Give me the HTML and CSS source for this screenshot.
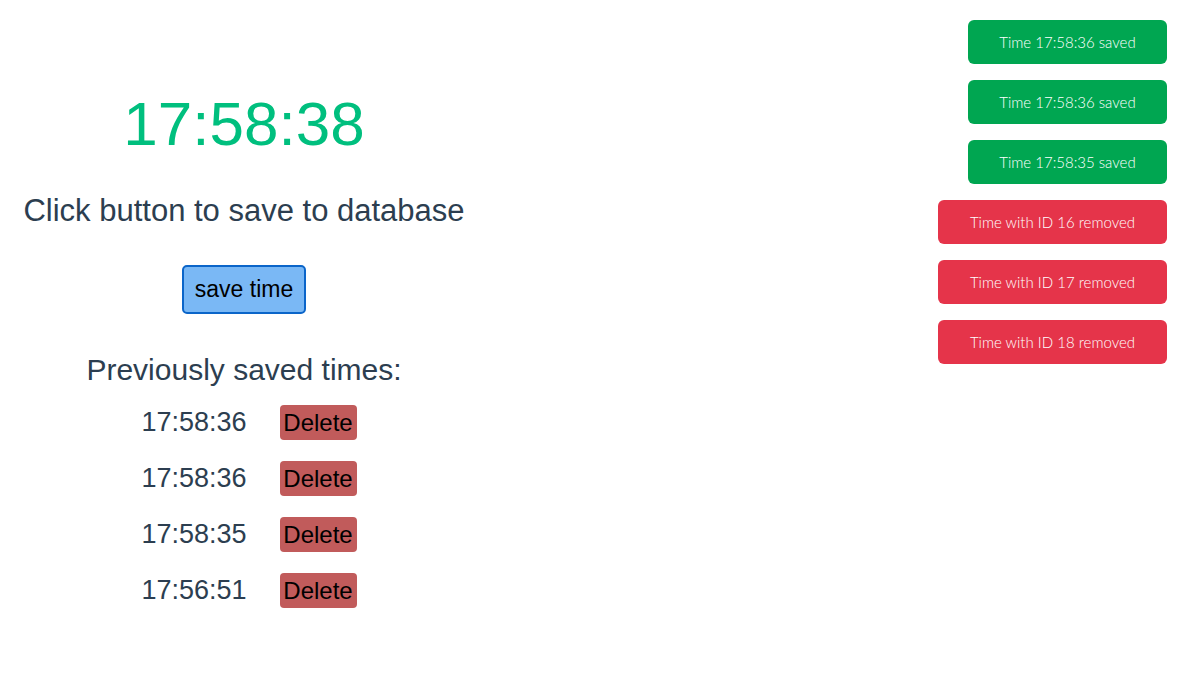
FILE: index.html
```html
<!DOCTYPE html>
<html>
<head>
<meta charset="utf-8">
<link rel="stylesheet" href="styles.css">
</head>
<body>
<div class="app">
  <div class="clock">17:58:38</div>
  <div class="hint">Click button to save to database</div>
  <button class="save">save time</button>
  <div class="subtitle">Previously saved times:</div>
  <ul class="list">
    <li class="row"><span class="time">17:58:36</span><button class="del">Delete</button></li>
    <li class="row"><span class="time">17:58:36</span><button class="del">Delete</button></li>
    <li class="row"><span class="time">17:58:35</span><button class="del">Delete</button></li>
    <li class="row"><span class="time">17:56:51</span><button class="del">Delete</button></li>
  </ul>
</div>
<div class="toasts">
  <div class="toast ok">Time 17:58:36 saved</div>
  <div class="toast ok">Time 17:58:36 saved</div>
  <div class="toast ok">Time 17:58:35 saved</div>
  <div class="toast err">Time with ID 16 removed</div>
  <div class="toast err">Time with ID 17 removed</div>
  <div class="toast err">Time with ID 18 removed</div>
</div>
</body>
</html>
```
FILE: styles.css
```css
html, body {
  margin: 0;
  padding: 0;
  background: #fff;
}
body {
  font-family: "Liberation Sans", Arial, sans-serif;
  color: #2c3e50;
}
.app {
  width: 488px;
  display: flex;
  flex-direction: column;
  align-items: center;
  padding-top: 84px;
}
.clock {
  font-size: 62px;
  line-height: 80px;
  color: #00bf7e;
}
.hint {
  font-size: 31px;
  line-height: 36px;
  margin-top: 29px;
}
.save {
  margin-top: 36px;
  width: 124px;
  height: 49px;
  font-family: "Liberation Sans", Arial, sans-serif;
  font-size: 23px;
  color: #000;
  background: #7ab8f5;
  border: 2px solid #0b65c9;
  border-radius: 5px;
  padding: 0;
}
.subtitle {
  font-size: 30px;
  line-height: 36px;
  margin-top: 38px;
}
.list {
  list-style: none;
  margin: 17px 0 0 0;
  padding: 0 0 0 9px;
  display: flex;
  flex-direction: column;
  gap: 21px;
}
.row {
  display: flex;
  align-items: center;
  gap: 32px;
  height: 35px;
}
.time {
  width: 107px;
  text-align: center;
  font-size: 27px;
}
.del {
  width: 77px;
  height: 35px;
  padding: 0;
  font-family: "Liberation Sans", Arial, sans-serif;
  font-size: 24px;
  color: #000;
  background: #c15b5b;
  border: none;
  border-radius: 4px;
}
.toasts {
  position: absolute;
  top: 20px;
  right: 30px;
  display: flex;
  flex-direction: column;
  align-items: flex-end;
  gap: 16px;
}
.toast {
  height: 44px;
  box-sizing: border-box;
  display: flex;
  align-items: center;
  justify-content: center;
  border-radius: 6px;
  color: #fff;
  font-family: "Lato", sans-serif;
  font-weight: 300;
  font-size: 15px;
}
.ok {
  width: 199px;
  background: #00a651;
}
.err {
  width: 229px;
  background: #e5344a;
}
```
